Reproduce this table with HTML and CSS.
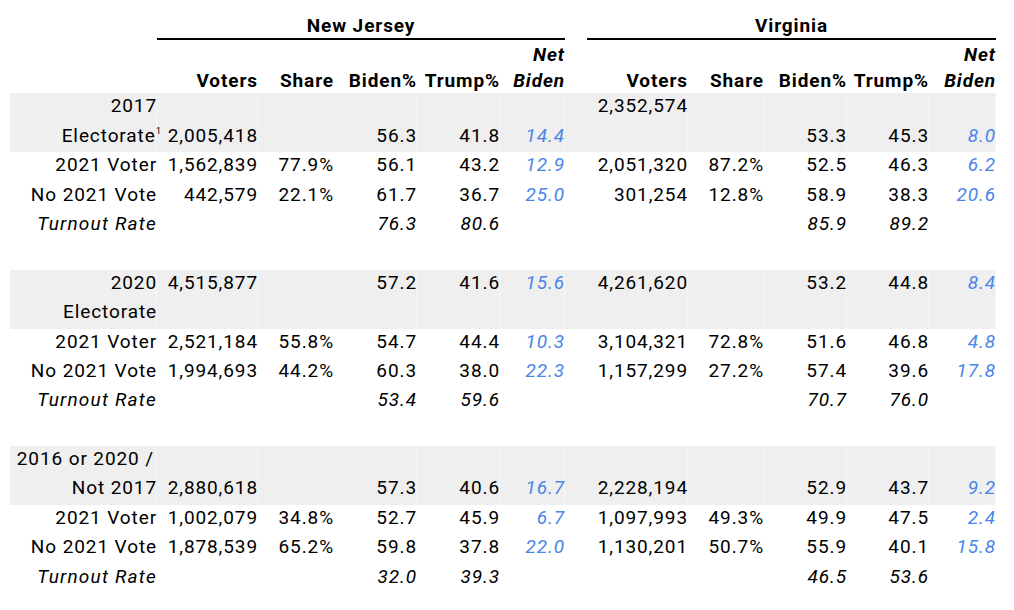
FILE: index.html
```html
<!DOCTYPE html>
<html>
<head>
<meta charset="utf-8">
<link rel="stylesheet" href="styles.css">
</head>
<body>
<div class="sheet">
  <div class="row head-states">
    <div class="c"></div>
    <div class="state nj">New Jersey</div>
    <div class="c"></div>
    <div class="state va">Virginia</div>
  </div>
  <div class="row head-cols">
    <div class="c"></div>
    <div class="c">Voters</div><div class="c">Share</div><div class="c">Biden%</div><div class="c">Trump%</div><div class="c net">Net<br>Biden</div>
    <div class="c"></div>
    <div class="c">Voters</div><div class="c">Share</div><div class="c">Biden%</div><div class="c">Trump%</div><div class="c net">Net<br>Biden</div>
  </div>

  <div class="row shade">
    <div class="c">2017</div>
    <div class="c"></div><div class="c"></div><div class="c"></div><div class="c"></div><div class="c"></div>
    <div class="c"></div>
    <div class="c">2,352,574</div><div class="c"></div><div class="c"></div><div class="c"></div><div class="c"></div>
  </div>
  <div class="row shade">
    <div class="c">Electorate<sup>1</sup></div>
    <div class="c">2,005,418</div><div class="c"></div><div class="c">56.3</div><div class="c">41.8</div><div class="c blue">14.4</div>
    <div class="c"></div>
    <div class="c"></div><div class="c"></div><div class="c">53.3</div><div class="c">45.3</div><div class="c blue">8.0</div>
  </div>
  <div class="row">
    <div class="c">2021 Voter</div>
    <div class="c">1,562,839</div><div class="c">77.9%</div><div class="c">56.1</div><div class="c">43.2</div><div class="c blue">12.9</div>
    <div class="c"></div>
    <div class="c">2,051,320</div><div class="c">87.2%</div><div class="c">52.5</div><div class="c">46.3</div><div class="c blue">6.2</div>
  </div>
  <div class="row">
    <div class="c">No 2021 Vote</div>
    <div class="c">442,579</div><div class="c">22.1%</div><div class="c">61.7</div><div class="c">36.7</div><div class="c blue">25.0</div>
    <div class="c"></div>
    <div class="c">301,254</div><div class="c">12.8%</div><div class="c">58.9</div><div class="c">38.3</div><div class="c blue">20.6</div>
  </div>
  <div class="row turnout">
    <div class="c label">Turnout Rate</div>
    <div class="c"></div><div class="c"></div><div class="c">76.3</div><div class="c">80.6</div><div class="c"></div>
    <div class="c"></div>
    <div class="c"></div><div class="c"></div><div class="c">85.9</div><div class="c">89.2</div><div class="c"></div>
  </div>
  <div class="row"></div>

  <div class="row shade">
    <div class="c">2020</div>
    <div class="c">4,515,877</div><div class="c"></div><div class="c">57.2</div><div class="c">41.6</div><div class="c blue">15.6</div>
    <div class="c"></div>
    <div class="c">4,261,620</div><div class="c"></div><div class="c">53.2</div><div class="c">44.8</div><div class="c blue">8.4</div>
  </div>
  <div class="row shade">
    <div class="c">Electorate</div>
    <div class="c"></div><div class="c"></div><div class="c"></div><div class="c"></div><div class="c"></div>
    <div class="c"></div>
    <div class="c"></div><div class="c"></div><div class="c"></div><div class="c"></div><div class="c"></div>
  </div>
  <div class="row">
    <div class="c">2021 Voter</div>
    <div class="c">2,521,184</div><div class="c">55.8%</div><div class="c">54.7</div><div class="c">44.4</div><div class="c blue">10.3</div>
    <div class="c"></div>
    <div class="c">3,104,321</div><div class="c">72.8%</div><div class="c">51.6</div><div class="c">46.8</div><div class="c blue">4.8</div>
  </div>
  <div class="row">
    <div class="c">No 2021 Vote</div>
    <div class="c">1,994,693</div><div class="c">44.2%</div><div class="c">60.3</div><div class="c">38.0</div><div class="c blue">22.3</div>
    <div class="c"></div>
    <div class="c">1,157,299</div><div class="c">27.2%</div><div class="c">57.4</div><div class="c">39.6</div><div class="c blue">17.8</div>
  </div>
  <div class="row turnout">
    <div class="c label">Turnout Rate</div>
    <div class="c"></div><div class="c"></div><div class="c">53.4</div><div class="c">59.6</div><div class="c"></div>
    <div class="c"></div>
    <div class="c"></div><div class="c"></div><div class="c">70.7</div><div class="c">76.0</div><div class="c"></div>
  </div>
  <div class="row"></div>

  <div class="row shade">
    <div class="c wrapline">2016 or 2020 /</div>
    <div class="c"></div><div class="c"></div><div class="c"></div><div class="c"></div><div class="c"></div>
    <div class="c"></div>
    <div class="c"></div><div class="c"></div><div class="c"></div><div class="c"></div><div class="c"></div>
  </div>
  <div class="row shade">
    <div class="c">Not 2017</div>
    <div class="c">2,880,618</div><div class="c"></div><div class="c">57.3</div><div class="c">40.6</div><div class="c blue">16.7</div>
    <div class="c"></div>
    <div class="c">2,228,194</div><div class="c"></div><div class="c">52.9</div><div class="c">43.7</div><div class="c blue">9.2</div>
  </div>
  <div class="row">
    <div class="c">2021 Voter</div>
    <div class="c">1,002,079</div><div class="c">34.8%</div><div class="c">52.7</div><div class="c">45.9</div><div class="c blue">6.7</div>
    <div class="c"></div>
    <div class="c">1,097,993</div><div class="c">49.3%</div><div class="c">49.9</div><div class="c">47.5</div><div class="c blue">2.4</div>
  </div>
  <div class="row">
    <div class="c">No 2021 Vote</div>
    <div class="c">1,878,539</div><div class="c">65.2%</div><div class="c">59.8</div><div class="c">37.8</div><div class="c blue">22.0</div>
    <div class="c"></div>
    <div class="c">1,130,201</div><div class="c">50.7%</div><div class="c">55.9</div><div class="c">40.1</div><div class="c blue">15.8</div>
  </div>
  <div class="row turnout">
    <div class="c label">Turnout Rate</div>
    <div class="c"></div><div class="c"></div><div class="c">32.0</div><div class="c">39.3</div><div class="c"></div>
    <div class="c"></div>
    <div class="c"></div><div class="c"></div><div class="c">46.5</div><div class="c">53.6</div><div class="c"></div>
  </div>
</div>
</body>
</html>
```

FILE: styles.css
```css
html, body {
  margin: 0;
  padding: 0;
  background: #ffffff;
}

body {
  font-family: Roboto, "Liberation Sans", sans-serif;
  font-size: 19px;
  letter-spacing: 0.9px;
  color: #000000;
}

.sheet {
  padding-left: 10px;
  width: 986px;
}

.row {
  display: grid;
  grid-template-columns: 147px 101px 76px 83px 83px 65px 22px 101px 76px 83px 82px 67px;
  height: 29.4px;
}

.c {
  text-align: right;
  padding-top: 1px;
  padding-right: 0;
  line-height: 23.4px;
  white-space: nowrap;
  min-width: 0;
}

.head-states {
  height: 39.5px;
  align-items: end;
}

.state {
  grid-column: span 5;
  text-align: center;
  font-weight: 700;
  line-height: 23.4px;
  height: 37.5px;
  box-sizing: border-box;
  padding-bottom: 0;
  display: flex;
  align-items: flex-end;
  justify-content: center;
  border-bottom: 2px solid #000000;
}

.head-cols {
  height: 53.9px;
  padding-top: 1.5px;
  box-sizing: border-box;
  align-items: end;
  font-weight: 700;
}

.head-cols .c {
  line-height: 26.2px;
}

.head-cols .net {
  font-style: italic;
}

.shade {
  background: #efefef;
}

.shade .c {
  box-shadow: inset -1px 0 0 #f5f5f5;
}

.blue {
  color: #4a86e8;
  font-style: italic;
}

.turnout .c {
  font-style: italic;
}

.turnout .label {
  letter-spacing: 1.2px;
}

.wrapline {
  padding-right: 3px;
}

sup {
  font-size: 0.5em;
  line-height: 0;
  letter-spacing: 0;
  vertical-align: 0.8em;
  margin-right: -4px;
}
```
